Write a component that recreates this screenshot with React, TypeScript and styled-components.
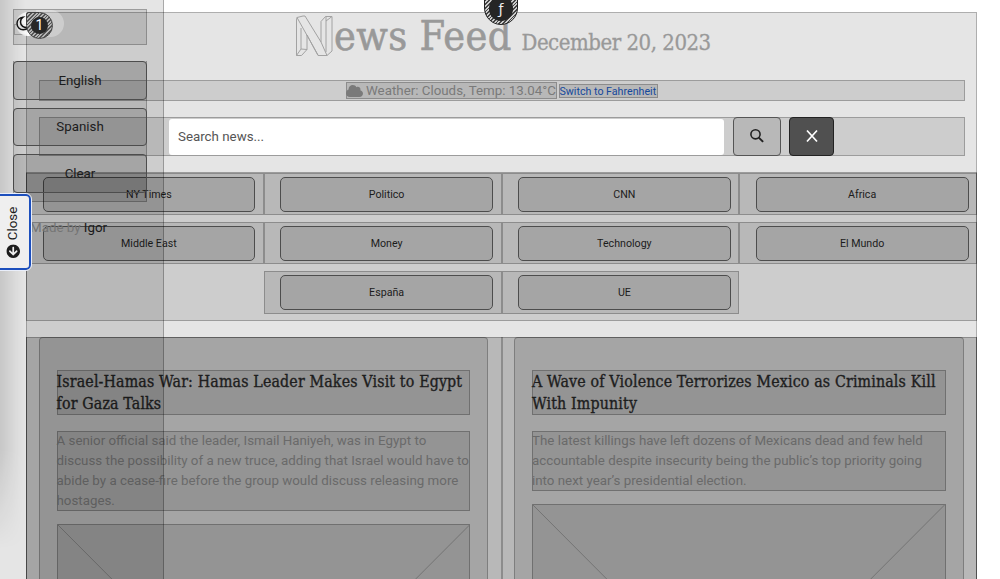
import React from 'react';
import styled, { createGlobalStyle } from 'styled-components';
import { FaArrowCircleLeft, FaCloud } from 'react-icons/fa';

const GlobalStyle = createGlobalStyle`
  * { box-sizing: border-box; }
  body { margin: 0; background: #fff; font-family: Roboto, sans-serif; font-size: 13.33px; color: #1c1c1c; overflow: hidden; }
  h1, h2, p { margin: 0; font-weight: 400; }
  button { font-family: inherit; color: inherit; }
`;

const shade = 'rgba(0, 0, 0, 0.1)';
const line = 'rgba(0, 0, 0, 0.24)';
const serif = "'DejaVu Serif Condensed', 'DejaVu Serif', serif";

const Screen = styled.div`
  position: relative;
  height: 579px;
  overflow: hidden;
  padding: 12px 23px 0 26px;
`;

const Box = styled.div`
  background: ${shade};
  border: 1px solid ${line};
`;

const InsetBox = styled.div`
  background: ${shade};
  box-shadow: inset 0 0 0 1px ${line};
`;

const Page = styled(Box)`
  height: 1000px;
`;

const Header = styled.header`
  height: 159px;
  padding: 0 11px 0 12px;
  display: flex;
  flex-direction: column;
`;

const Title = styled.h1`
  height: 67px;
  padding-left: 256px;
  display: flex;
  align-items: baseline;
  font-family: ${serif};
  color: #999;
  white-space: nowrap;
  line-height: 47px;
`;

const Initial = styled.svg`
  width: 38px;
  height: 42px;
  flex: none;
  align-self: flex-start;
  margin: 2px -1px 0 0;
`;

const Name = styled.span`
  width: 188.5px;
  padding-left: 2px;
  font-size: 41px;
  letter-spacing: 0.4px;
  -webkit-text-stroke: 0.6px #999;
`;

const DateText = styled.span`
  padding-left: 1px;
  font-size: 22px;
  letter-spacing: -0.48px;
  -webkit-text-stroke: 0.3px #999;
`;

const Weather = styled(Box)`
  height: 21px;
  padding-left: 306px;
  display: flex;
  align-items: center;
  gap: 2px;
  white-space: nowrap;
`;

const Reading = styled(Box)`
  width: 211px;
  height: 17px;
  display: flex;
  align-items: center;
  gap: 3px;
  color: #7a7a7a;
  line-height: 15px;
  svg { width: 17px; height: 14px; flex: none; margin-left: -1px; }
`;

const Switch = styled(Box)`
  width: 99px;
  height: 14px;
  line-height: 13px;
  margin-top: 1px;
  font-size: 10.67px;
  text-indent: -0.5px;
  color: #15489c;
`;

const Search = styled(Box)`
  height: 39px;
  margin-top: 16px;
  padding-left: 129px;
  display: flex;
  align-items: center;
`;

const Field = styled.div`
  width: 555px;
  height: 36px;
  border-radius: 3px;
  background: #fff;
  padding-left: 9px;
  line-height: 35px;
  color: #555;
`;

const SearchButton = styled.button<{ $dark?: boolean }>`
  width: ${p => (p.$dark ? 45 : 48)}px;
  height: 39px;
  margin-left: ${p => (p.$dark ? 8 : 9)}px;
  padding: 0 0 1px;
  display: grid;
  place-items: center;
  border: 1px solid ${p => (p.$dark ? '#222' : '#555')};
  border-radius: 4px;
  background: ${p => (p.$dark ? '#505050' : shade)};
  color: ${p => (p.$dark ? '#fff' : '#222')};
`;

const Topics = styled(InsetBox)`
  height: 149px;
  margin: 0 -1px;
  padding-top: 0.5px;
  display: flex;
  flex-wrap: wrap;
  justify-content: center;
  align-content: flex-start;
  row-gap: 7px;
`;

const Topic = styled(Box)`
  width: 25%;
  height: 42.4px;
  padding: 3px 7.5px 3px 15.5px;
`;

const Button = styled.button`
  display: block;
  width: 100%;
  height: 35px;
  padding: 0;
  border: 1px solid #4d4d4d;
  border-radius: 5px;
  background: ${shade};
  font-size: 10.67px;
`;

const News = styled(InsetBox)`
  margin: 16px -1px 0;
  height: 700px;
  display: flex;
`;

const Column = styled(Box)`
  flex: 1;
  min-width: 0;
  border-top: 0;
  padding: 0 12.5px 0 11.5px;
`;

const Card = styled(Box)`
  height: 690px;
  border-radius: 4px;
  padding: 32px 17px 0;
`;

const Headline = styled(InsetBox).attrs({ as: 'h2' })`
  height: 45px;
  padding-top: 1px;
  font: 15.8px / 22.4px ${serif};
  -webkit-text-stroke: 0.35px #222;
  white-space: nowrap;
  letter-spacing: 0.16px;
`;

const Summary = styled(InsetBox).attrs({ as: 'p' })`
  margin: 15.5px 0 13.5px;
  line-height: 20px;
  color: #6a6a6a;
  white-space: nowrap;
`;

const Picture = styled(InsetBox)`
  height: 415px;
  svg { display: block; width: 100%; height: 100%; }
`;

const Sidebar = styled.aside`
  position: absolute;
  left: 0;
  top: -1px;
  width: 164px;
  height: 582px;
  padding: 10px 16px 0 13px;
  background: ${shade};
  border-right: 1px solid rgba(0, 0, 0, 0.26);
`;

const EdgeShadow = styled.div`
  position: absolute;
  left: 0;
  top: 0;
  width: 26px;
  height: 560px;
  background: linear-gradient(90deg, rgba(0, 0, 0, 0.13), rgba(0, 0, 0, 0.03) 18px, transparent 26px);
  mask-image: linear-gradient(180deg, #000 450px, transparent 550px);
`;

const Mode = styled(Box)`
  width: 134px;
  height: 36px;
  display: flex;
`;

const Toggle = styled.div`
  position: relative;
  width: 50px;
  height: 27px;
  border-radius: 0 14px 14px 0;
  background: linear-gradient(90deg, transparent 22px, rgba(255, 255, 255, 0.3) 22px);
  > svg { position: absolute; left: 2px; top: 6px; }
`;

const Frame = styled.div`
  position: absolute;
  left: 0;
  top: 14px;
  width: 12px;
  height: 11px;
  border: 1px solid ${line};
  border-right: 0;
`;

const Knob = styled.div`
  position: absolute;
  left: 2px;
  top: 2px;
  width: 24px;
  height: 24px;
  border-radius: 50%;
  background: linear-gradient(90deg, rgba(255, 255, 255, 0.35), #fff 50%);
`;

const Marker = styled.div`
  position: absolute;
  left: 12px;
  top: 2px;
  width: 27px;
  height: 27px;
  border: 1.5px solid #444;
  border-radius: 2px 14px 14px 14px;
  background: repeating-linear-gradient(135deg, #555 0 1.2px, #b4b4b4 1.2px 2.6px);
  display: grid;
  place-items: center;
  span {
    width: 17px;
    height: 17px;
    border-radius: 50%;
    background: #272727;
    color: #fff;
    text-align: center;
    line-height: 17px;
    font-size: 14px;
  }
`;

const Languages = styled.div`
  width: 134px;
  height: 141px;
  margin-top: 16px;
  background: ${shade};
  border: 1px solid ${line};
  border-top: 0;
  display: flex;
  flex-direction: column;
  gap: 8px;
  button { width: 134px; margin-left: -1px; height: 38.6px; font-size: 13.33px; flex: none; border-radius: 4px; }
`;

const Credit = styled.p`
  margin: 16px 0 0 17px;
  color: #747474;
  line-height: 20px;
  span { color: #1a1a1a; }
`;

const Close = styled.button`
  position: absolute;
  left: -5px;
  top: 194px;
  width: 36px;
  height: 76px;
  padding: 0;
  border: 2px solid #1c4fbd;
  outline: 1px solid #e9eefa;
  border-radius: 5px;
  background: #efefef;
  display: flex;
  align-items: center;
  justify-content: center;
  span { flex: none; display: flex; align-items: center; gap: 4px; transform: rotate(-90deg); font-size: 13.33px; }
  svg { width: 14px; height: 14px; }
`;

const Badge = styled.div`
  position: absolute;
  left: 484px;
  top: -12px;
  width: 34px;
  height: 37px;
  padding: 7px 4px 3px;
  border: 1px solid #222;
  border-radius: 0 0 17px 17px;
  background: repeating-linear-gradient(135deg, #444 0 1.2px, #ccc 1.2px 2.6px);
  span {
    display: block;
    height: 25px;
    border-radius: 13px;
    background: #252525;
    color: #eee;
    text-align: center;
    font: 14px / 27px 'DejaVu Sans', sans-serif;
  }
`;

const topics = ['NY Times', 'Politico', 'CNN', 'Africa', 'Middle East', 'Money', 'Technology', 'El Mundo', 'España', 'UE'];

const articles = [
  {
    title: ['Israel-Hamas War: Hamas Leader Makes Visit to Egypt', 'for Gaza Talks'],
    text: [
      'A senior official said the leader, Ismail Haniyeh, was in Egypt to',
      'discuss the possibility of a new truce, adding that Israel would have to',
      'abide by a cease-fire before the group would discuss releasing more',
      'hostages.',
    ],
  },
  {
    title: ['A Wave of Violence Terrorizes Mexico as Criminals Kill', 'With Impunity'],
    text: [
      'The latest killings have left dozens of Mexicans dead and few held',
      'accountable despite insecurity being the public’s top priority going',
      'into next year’s presidential election.',
    ],
  },
];

const Lines = ({ items }: { items: string[] }) => (
  <>
    {items.map((t, i) => (
      <React.Fragment key={t}>
        {i > 0 && <br />}
        {t}
      </React.Fragment>
    ))}
  </>
);

export default function App() {
  return (
    <Screen>
      <GlobalStyle />
      <Page>
        <Header>
          <Title>
            <Initial viewBox="0 0 38 42" fill="none" stroke="#a2a2a2" strokeWidth="1" strokeLinejoin="round">
              <path d="M2 2.500 8 1h2l16 26V6.500l4.500-5h6.500V36l-5 4.500h-9L12 20v14.500l-5.500 6H1.500V5z" />
              <path d="M2 2.500 23 40M26 27l6 13.500M31 1.500V37M1.500 40.500 6 34l6 .5M6 13v21M37 1.500 31 6" />
            </Initial>
            <Name>ews Feed</Name>
            <DateText>December 20, 2023</DateText>
          </Title>
          <Weather>
            <Reading><FaCloud />Weather: Clouds, Temp: 13.04°C</Reading>
            <Switch>Switch to Fahrenheit</Switch>
          </Weather>
          <Search>
            <Field>Search news...</Field>
            <SearchButton>
              <svg width="16" height="16" viewBox="0 0 16 16" fill="none" stroke="currentColor" strokeWidth="1.6">
                <circle cx="6.5" cy="6.3" r="4.6" />
                <path d="m9.8 9.6 4.3 4.3" strokeWidth="2" />
              </svg>
            </SearchButton>
            <SearchButton $dark>
              <svg width="14" height="14" viewBox="0 0 14 14" stroke="currentColor" strokeWidth="1.7">
                <path d="m2 1.5 10 11M12 1.5l-10 11" />
              </svg>
            </SearchButton>
          </Search>
        </Header>
        <Topics>
          {topics.map(t => (
            <Topic key={t}><Button>{t}</Button></Topic>
          ))}
        </Topics>
        <News>
          {articles.map(a => (
            <Column key={a.title[0]}>
              <Card>
                <Headline><Lines items={a.title} /></Headline>
                <Summary><Lines items={a.text} /></Summary>
                <Picture>
                  <svg viewBox="0 0 100 100" preserveAspectRatio="none" stroke="#747474">
                    <path d="M0 0 100 100M100 0 0 100" vectorEffect="non-scaling-stroke" />
                  </svg>
                </Picture>
              </Card>
            </Column>
          ))}
        </News>
      </Page>
      <Sidebar>
        <EdgeShadow />
        <Mode>
          <Toggle>
            <Frame />
            <Knob />
            <svg width="14" height="15" viewBox="0 0 14 15" fill="#ddd" stroke="#111" strokeWidth="1.5">
              <path d="M7 1.2C3.500 1.500 1 4.200 1 7.500c0 3.600 2.700 6.300 6.200 6.300 2 0 3.800-.8 5-2.300-4.500.6-7.700-2-7.700-5.500 0-2 1-3.700 2.500-4.800z" />
            </svg>
            <Marker><span>1</span></Marker>
          </Toggle>
        </Mode>
        <Languages>
          <Button>English</Button>
          <Button>Spanish</Button>
          <Button>Clear</Button>
        </Languages>
        <Credit>Made by <span>Igor</span></Credit>
      </Sidebar>
      <Close><span><FaArrowCircleLeft />Close</span></Close>
      <Badge><span>ƒ</span></Badge>
    </Screen>
  );
}
